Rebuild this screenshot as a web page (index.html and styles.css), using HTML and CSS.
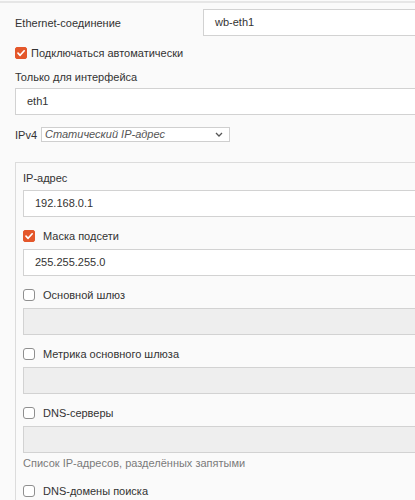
FILE: index.html
```html
<!DOCTYPE html>
<html lang="ru">
<head>
<meta charset="utf-8">
<link rel="stylesheet" href="styles.css">
</head>
<body>
<div class="page">
  <div class="conn-row">
    <span class="conn-label">Ethernet-соединение</span>
    <div class="field conn-field">wb-eth1</div>
  </div>
  <div class="check top-check">
    <span class="box checked"><svg viewBox="0 0 12 12" width="12" height="12"><path d="M3 6.2 L5.1 8.3 L9.2 3.8" fill="none" stroke="#fff" stroke-width="1.7" stroke-linecap="round" stroke-linejoin="round"/></svg></span>
    <span>Подключаться автоматически</span>
  </div>
  <div class="label iface-label">Только для интерфейса</div>
  <div class="field">eth1</div>
  <div class="ipv4-row">
    <span>IPv4</span>
    <div class="select">
      <span class="select-text">Статический IP-адрес</span>
      <svg class="chev" viewBox="0 0 8 5" width="8" height="5"><path d="M1 1 L4 4 L7 1" fill="none" stroke="#555" stroke-width="1.3"/></svg>
    </div>
  </div>
  <div class="panel">
    <div class="label first">IP-адрес</div>
    <div class="field">192.168.0.1</div>

    <div class="check">
      <span class="box checked"><svg viewBox="0 0 12 12" width="12" height="12"><path d="M3 6.2 L5.1 8.3 L9.2 3.8" fill="none" stroke="#fff" stroke-width="1.7" stroke-linecap="round" stroke-linejoin="round"/></svg></span>
      <span>Маска подсети</span>
    </div>
    <div class="field">255.255.255.0</div>

    <div class="check">
      <span class="box"></span>
      <span>Основной шлюз</span>
    </div>
    <div class="field disabled"></div>

    <div class="check">
      <span class="box"></span>
      <span>Метрика основного шлюза</span>
    </div>
    <div class="field disabled"></div>

    <div class="check">
      <span class="box"></span>
      <span>DNS-серверы</span>
    </div>
    <div class="field disabled"></div>
    <div class="help">Список IP-адресов, разделённых запятыми</div>

    <div class="check last">
      <span class="box"></span>
      <span>DNS-домены поиска</span>
    </div>
  </div>
</div>
</body>
</html>
```
FILE: styles.css
```css
html, body {
  margin: 0;
  padding: 0;
  background: #fafafa;
  overflow: hidden;
}
body {
  font-family: "Liberation Sans", Arial, sans-serif;
  font-size: 11px;
  color: #333;
  width: 415px;
  height: 500px;
}
.page {
  margin-top: 1px;
  border-top: 2px solid #e6e6e6;
  padding-left: 15px;
  height: 497px;
  overflow: hidden;
}
.field {
  box-sizing: border-box;
  height: 27px;
  line-height: 25px;
  border: 1px solid #d2d2d2;
  background: #fff;
  padding-left: 11px;
  width: 420px;
  color: #333;
}
.field.disabled {
  background: #eeeeee;
}
.conn-row {
  display: flex;
  align-items: center;
  margin-top: 6px;
}
.conn-label {
  width: 188px;
  flex: none;
}
.conn-field {
  width: 230px;
  flex: none;
}
.check {
  display: flex;
  align-items: center;
  height: 18px;
  gap: 8px;
}
.top-check {
  gap: 4px;
  margin-top: 8px;
}
.box {
  box-sizing: border-box;
  width: 12px;
  height: 12px;
  border: 1px solid #8f8f8f;
  border-radius: 3px;
  background: #fff;
  flex: none;
  display: block;
}
.box svg { display: block; margin: -1px; }
.box.checked {
  background: #e4572b;
  border-color: #e4572b;
  border-radius: 2px;
}
.label {
  height: 18px;
  line-height: 18px;
}
.iface-label {
  margin-top: 6px;
  margin-bottom: 2px;
}
.ipv4-row {
  display: flex;
  align-items: center;
  gap: 4px;
  margin-top: 12px;
  height: 15px;
}
.select {
  box-sizing: border-box;
  width: 189px;
  height: 15px;
  border: 1px solid #cfcfcf;
  background: #fff;
  display: flex;
  align-items: center;
  justify-content: space-between;
  padding: 0 6px 0 3px;
}
.select-text {
  font-style: italic;
  color: #555;
  line-height: 13px;
}
.chev { display: block; }
.panel {
  margin-top: 20px;
  border: 1px solid #dcdcdc;
  border-right: none;
  padding: 6px 0 0 7px;
  height: 400px;
}
.label.first {
  margin-bottom: 3px;
}
.panel .check {
  margin-top: 10px;
  margin-bottom: 4px;
}
.help {
  color: #7a7a7a;
  margin-top: 3px;
  line-height: 14px;
}
.panel .check.last {
  margin-top: 12px;
}
```
